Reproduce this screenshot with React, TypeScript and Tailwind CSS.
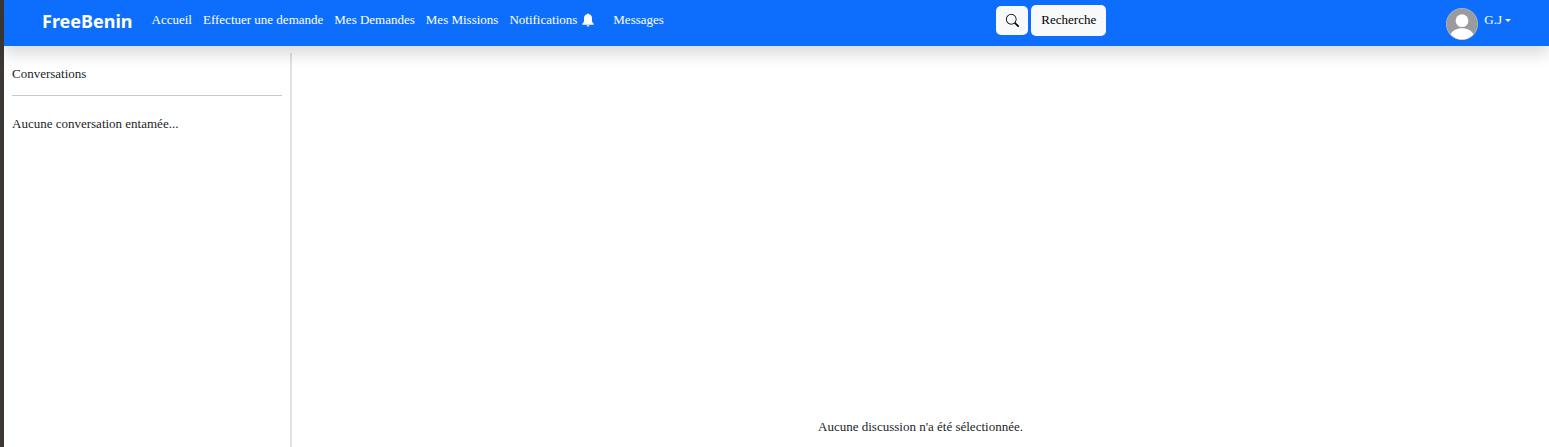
import { BsSearch } from "react-icons/bs";

const links = ["Accueil", "Effectuer une demande", "Mes Demandes", "Mes Missions"];

function Bell() {
  return (
    <svg viewBox="0 0 12 14" className="h-[14px] w-3" fill="currentColor" aria-hidden="true">
      <path d="M6 0.500C5.400 0.500 5 0.800 4.900 1.200C3 1.600 2 3.200 2 5.200V7.500C2 9 1.400 9.800 0.300 10.800V11.700H11.700V10.800C10.600 9.800 10 9 10 7.500V5.200C10 3.200 9 1.600 7.100 1.200C7 0.800 6.600 0.500 6 0.500Z" />
      <path d="M4.600 12.200H7.400C7.300 13.100 6.800 13.600 6 13.600S4.700 13.100 4.600 12.200Z" />
    </svg>
  );
}

function Avatar() {
  return (
    <svg viewBox="0 0 32 32" className="size-8" aria-hidden="true">
      <defs>
        <clipPath id="avatar-clip">
          <circle cx="16" cy="16" r="15.4" />
        </clipPath>
      </defs>
      <circle cx="16" cy="16" r="16" fill="#b9bcc2" />
      <g clipPath="url(#avatar-clip)">
        <rect width="32" height="32" fill="#9b9b9f" />
        <circle cx="16" cy="12.7" r="6.4" fill="#fff" />
        <path d="M2 32L4.200 26.500C6.500 22.500 10.500 20.200 16 20.200S25.500 22.500 27.800 26.500L30 32Z" fill="#fff" />
      </g>
    </svg>
  );
}

function Navbar() {
  return (
    <header className="relative z-10 flex h-[46px] items-start bg-[#0d6efd] pl-[38px] pr-[38px] text-white shadow-[0_8px_16px_rgba(0,0,0,0.15)]">
      <a href="#" className="mr-[19px] pt-2 font-['Noto_Sans',sans-serif] text-[18px] leading-[27px] font-bold">
        FreeBenin
      </a>
      <nav className="flex gap-[11px] pt-[10px]">
        {links.map((label) => (
          <a key={label} href="#">
            {label}
          </a>
        ))}
        <a href="#" className="mr-2 flex items-center gap-[5px]">
          Notifications
          <Bell />
        </a>
        <a href="#">Messages</a>
      </nav>
      <form className="mr-[340px] ml-auto flex items-center gap-[3px] pt-[5px] text-black" onSubmit={(e) => e.preventDefault()}>
        <button type="button" aria-label="Rechercher" className="flex h-[29px] w-8 items-center justify-center rounded-[5px] bg-[#f8f9fa]">
          <BsSearch className="size-[13px]" />
        </button>
        <button type="submit" className="h-[31px] w-[75px] rounded-[5px] bg-[#f8f9fa] pb-[2px]">
          Recherche
        </button>
      </form>
      <button type="button" className="flex items-start gap-[6px] pt-2">
        <Avatar />
        <span className="flex items-center gap-[3px] pt-[2px]">
          G.J
          <span className="border-x-[3px] border-t-[3px] border-x-transparent border-t-white" />
        </span>
      </button>
    </header>
  );
}

export default function App() {
  return (
    <div className="flex min-h-screen flex-col border-l-4 border-[#3b3835] bg-white font-['Liberation_Serif',serif] text-[13px] leading-5 text-[#212529]">
      <Navbar />
      <main className="mt-[7px] flex grow">
        <aside className="w-72 shrink-0 border-r-2 border-[#dee2e6] px-2 pt-[11px]">
          <h1>Conversations</h1>
          <hr className="mt-[11px] mb-[18px] border-[#c7c8c9]" />
          <p>Aucune conversation entamée...</p>
        </aside>
        <section className="flex grow items-end justify-center pb-[10px]">
          <p>Aucune discussion n'a été sélectionnée.</p>
        </section>
      </main>
    </div>
  );
}
